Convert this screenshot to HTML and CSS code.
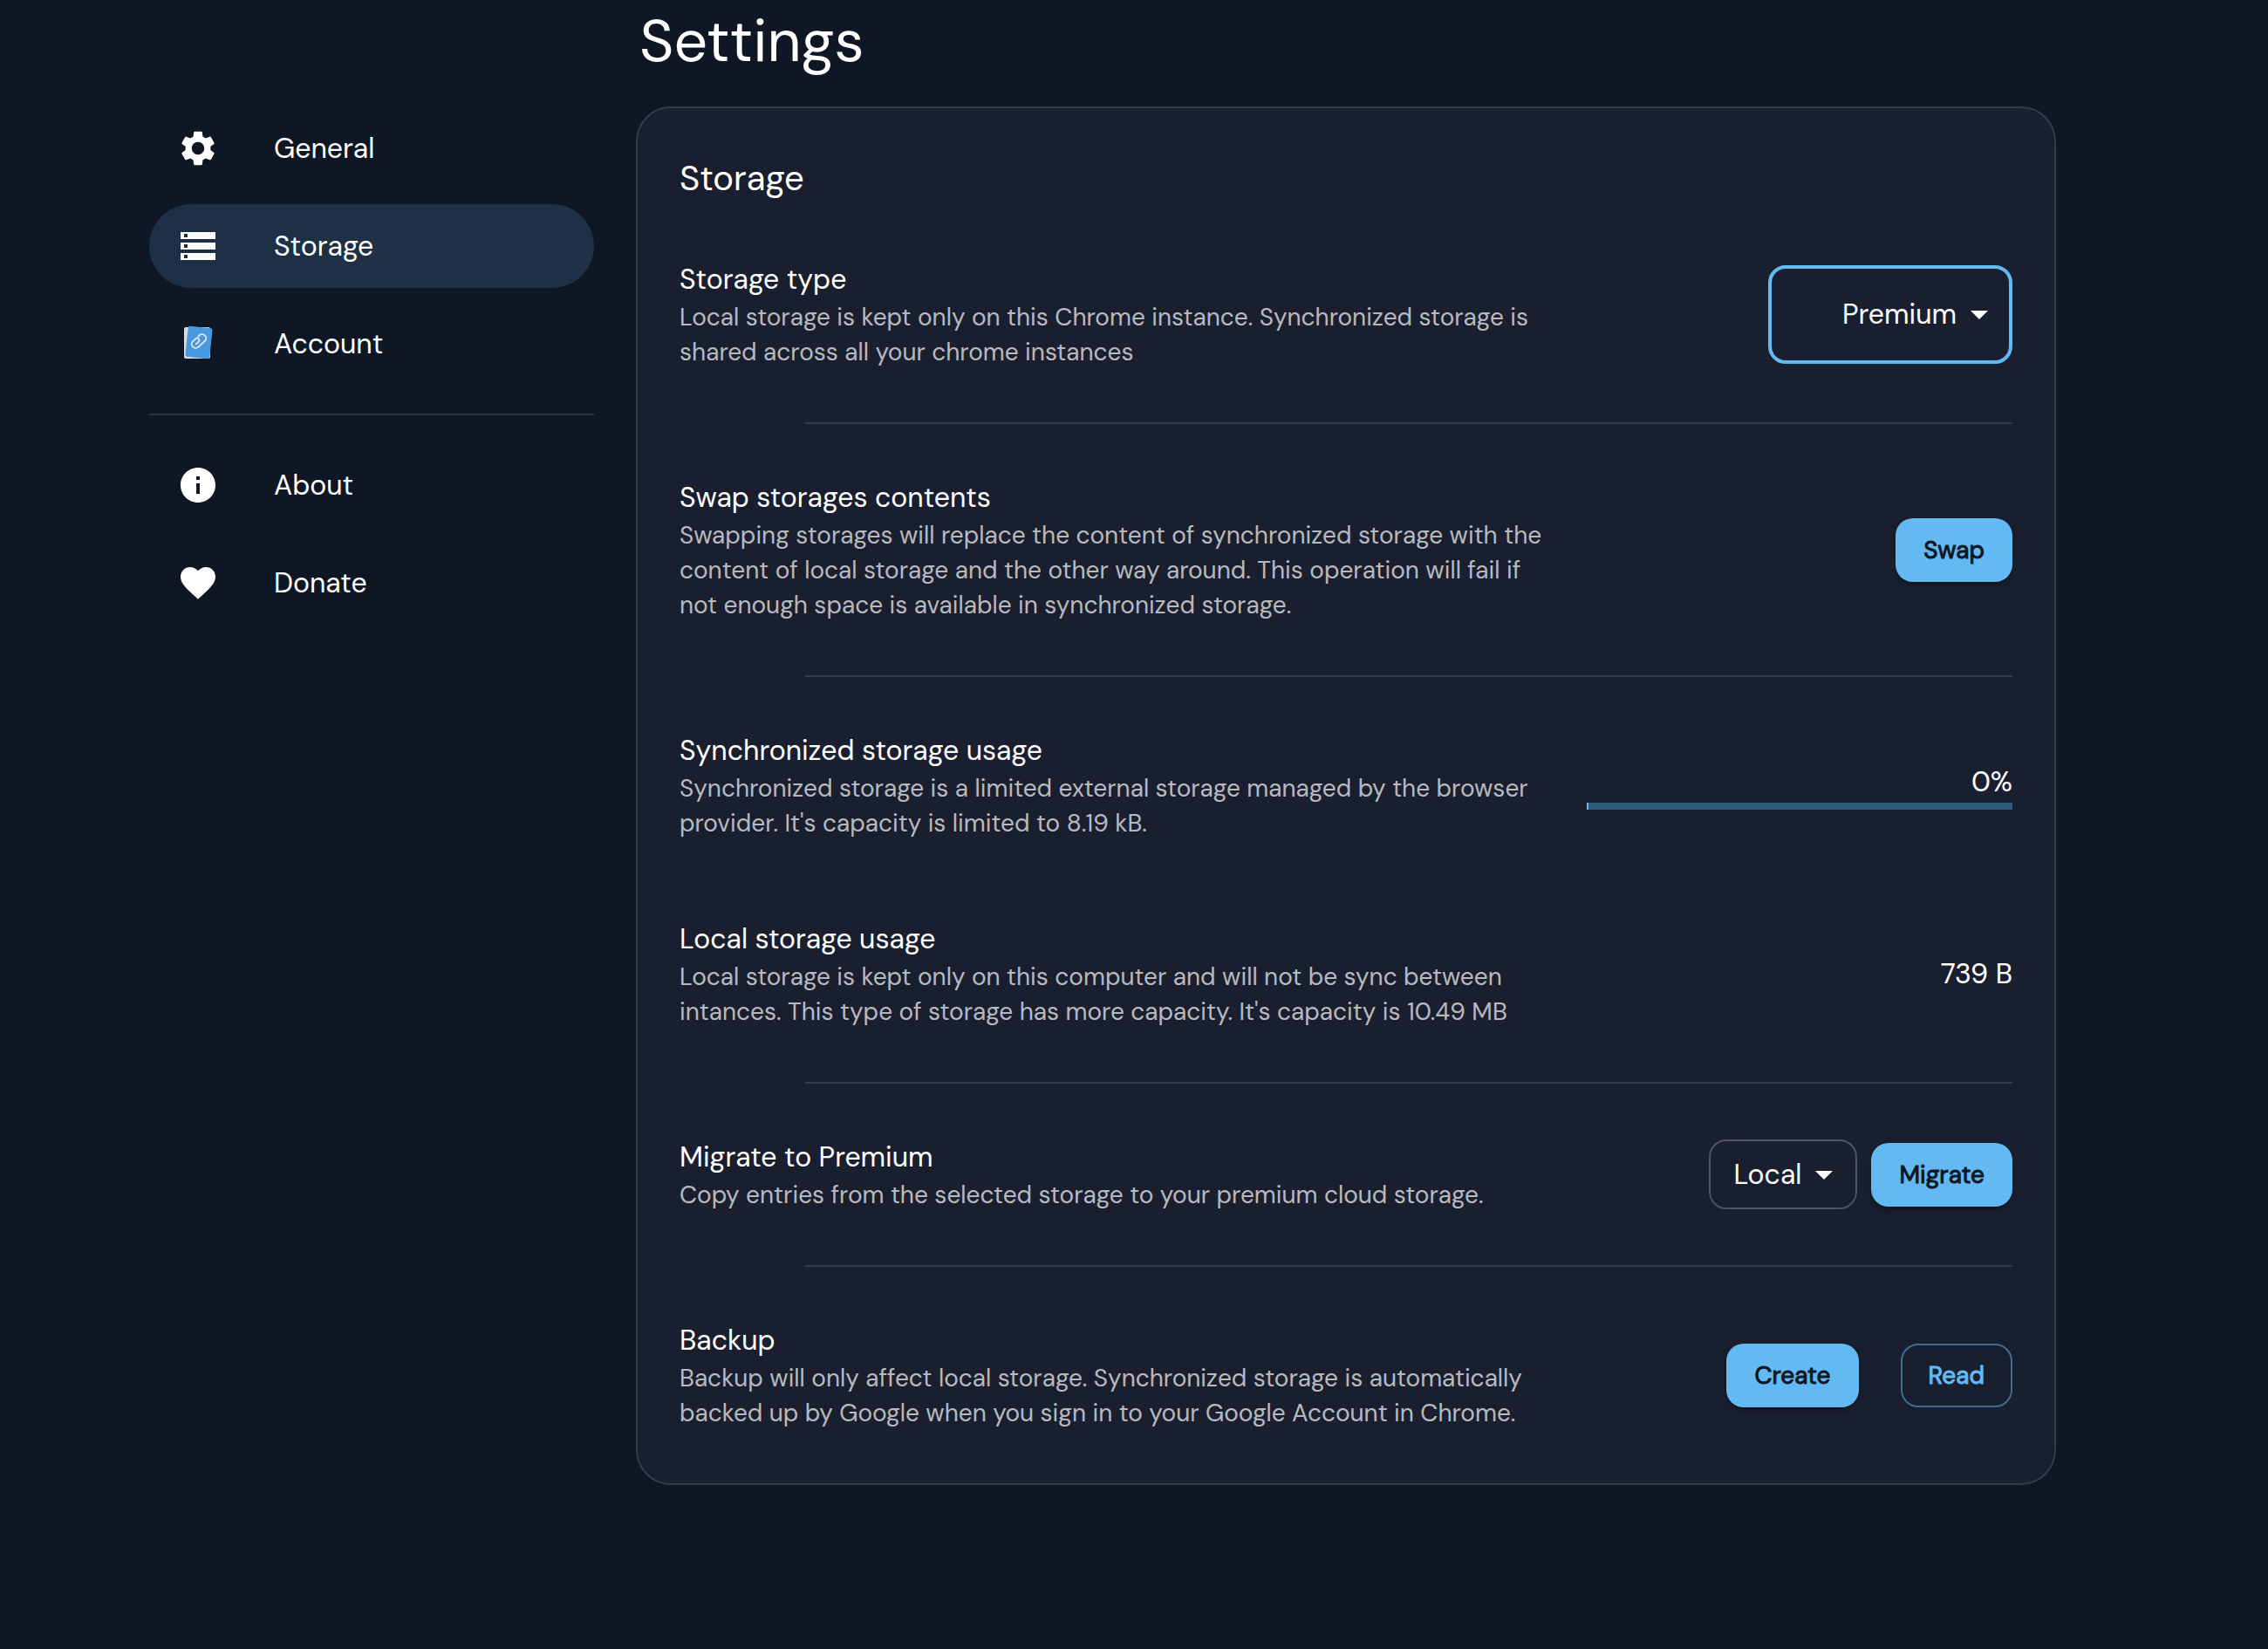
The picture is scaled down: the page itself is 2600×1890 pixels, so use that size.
FILE: index.html
```html
<!DOCTYPE html>
<html lang="en">
<head>
    <meta charset="UTF-8">
    <title>Settings</title>
    <link rel="stylesheet" href="styles.css">
</head>
<body>

<div class="page">
    <h1>Settings</h1>

    <nav class="menu">
        <a href="#general">
            <svg viewBox="0 0 24 24"><path d="M19.14 12.94c.04-.3.06-.61.06-.94 0-.32-.02-.64-.07-.94l2.03-1.58c.18-.14.23-.41.12-.61l-1.92-3.32c-.12-.22-.37-.29-.59-.22l-2.39.96c-.5-.38-1.03-.7-1.62-.94l-.36-2.54c-.04-.24-.24-.41-.48-.41h-3.84c-.24 0-.43.17-.47.41l-.36 2.54c-.59.24-1.13.57-1.62.94l-2.39-.96c-.22-.08-.47 0-.59.22L2.74 8.87c-.12.21-.08.47.12.61l2.03 1.58c-.05.3-.09.63-.09.94s.02.64.07.94l-2.03 1.58c-.18.14-.23.41-.12.61l1.92 3.32c.12.22.37.29.59.22l2.39-.96c.5.38 1.03.7 1.62.94l.36 2.54c.05.24.24.41.48.41h3.84c.24 0 .44-.17.47-.41l.36-2.54c.59-.24 1.13-.56 1.62-.94l2.39.96c.22.08.47 0 .59-.22l1.92-3.32c.12-.22.07-.47-.12-.61l-2.01-1.58zM12 15.6c-1.98 0-3.6-1.62-3.6-3.6s1.62-3.6 3.6-3.6 3.6 1.62 3.6 3.6-1.62 3.6-3.6 3.6z"/></svg>
            <span>General</span>
        </a>
        <a href="#storage" class="active">
            <svg viewBox="0 0 24 24"><path d="M2 20h20v-4H2v4zm2-3h2v2H4v-2zM2 4v4h20V4H2zm4 3H4V5h2v2zm-4 7h20v-4H2v4zm2-3h2v2H4v-2z"/></svg>
            <span>Storage</span>
        </a>
        <a href="#account">
            <svg viewBox="0 0 48 48">
                <rect x="8" y="5" width="30" height="36" rx="2" fill="#dcdcdc"/>
                <rect x="11" y="5" width="28" height="35" rx="2" fill="#4799e0" transform="rotate(6 25 22)"/>
                <path d="M3 -4.500H5a4.500 4.500 0 0 1 0 9H-5a4.500 4.500 0 0 1 0-9H-1a2.400 2.400 0 0 1 0 4.800H-4.500" transform="translate(25 21) rotate(-42)" fill="none" stroke="#dcdfe3" stroke-width="2" stroke-linecap="round"/>
            </svg>
            <span>Account</span>
        </a>
        <hr>
        <a href="#about">
            <svg viewBox="0 0 24 24"><path d="M12 2C6.480 2 2 6.480 2 12s4.480 10 10 10 10-4.480 10-10S17.520 2 12 2zm1 15h-2v-6h2v6zm0-8h-2V7h2v2z"/></svg>
            <span>About</span>
        </a>
        <a href="#donate">
            <svg viewBox="0 0 24 24"><path d="M12 21.350l-1.450-1.320C5.400 15.360 2 12.280 2 8.500 2 5.420 4.420 3 7.500 3c1.740 0 3.410.81 4.500 2.090C13.090 3.810 14.760 3 16.500 3 19.580 3 22 5.420 22 8.500c0 3.780-3.400 6.860-8.550 11.540L12 21.350z"/></svg>
            <span>Donate</span>
        </a>
    </nav>

    <main class="card">
        <h2>Storage</h2>

        <div class="row">
            <div class="text">
                <label for="type">Storage type</label>
                <p>Local storage is kept only on this Chrome instance. Synchronized storage is shared across all your chrome instances</p>
            </div>
            <div class="action">
                <div class="select big">
                    <select id="type">
                        <option>Local</option>
                        <option>Synchronized</option>
                        <option selected>Premium</option>
                    </select>
                    <svg viewBox="0 0 24 24"><path d="M7 10l5 5 5-5z"/></svg>
                </div>
            </div>
        </div>
        <hr>
        <div class="row">
            <div class="text">
                <h3>Swap storages contents</h3>
                <p>Swapping storages will replace the content of synchronized storage with the content of local storage and the other way around. This operation will fail if not enough space is available in synchronized storage.</p>
            </div>
            <div class="action">
                <button>Swap</button>
            </div>
        </div>
        <hr>
        <div class="row">
            <div class="text">
                <label for="usage">Synchronized storage usage</label>
                <p>Synchronized storage is a limited external storage managed by the browser provider. It's capacity is limited to 8.19 kB.</p>
            </div>
            <div class="usage">
                <span>0%</span>
                <progress id="usage" value="0.4" max="100"></progress>
            </div>
        </div>
        <div class="row">
            <div class="text">
                <h3>Local storage usage</h3>
                <p>Local storage is kept only on this computer and will not be sync between intances. This type of storage has more capacity. It's capacity is 10.49 MB</p>
            </div>
            <div class="action">
                <span>739 B</span>
            </div>
        </div>
        <hr>
        <div class="row">
            <div class="text">
                <label for="source">Migrate to Premium</label>
                <p>Copy entries from the selected storage to your premium cloud storage.</p>
            </div>
            <div class="action tight">
                <div class="select">
                    <select id="source">
                        <option selected>Local</option>
                        <option>Sync</option>
                    </select>
                    <svg viewBox="0 0 24 24"><path d="M7 10l5 5 5-5z"/></svg>
                </div>
                <button>Migrate</button>
            </div>
        </div>
        <hr>
        <div class="row">
            <div class="text">
                <h3>Backup</h3>
                <p>Backup will only affect local storage. Synchronized storage is automatically backed up by Google when you sign in to your Google Account in Chrome.</p>
            </div>
            <div class="action">
                <button>Create</button>
                <button class="outlined">Read</button>
            </div>
        </div>
    </main>
</div>

</body>
</html>
```
FILE: styles.css
```css
*{
    box-sizing: border-box;
    margin: 0;
    padding: 0;
}
body{
    background-color: #0f1624;
    color: #fff;
    font-family: "DM Sans", "Open Sans", sans-serif;
    font-size: 32px;
    line-height: 48px;
}
.page{
    display: grid;
    grid-template-columns: 510px 1fr;
    column-gap: 48px;
    padding: 0 243px 48px 171px;
}
h1{
    grid-column: 2;
    padding: 5px 4px 33px;
    font-size: 68px;
    font-weight: 400;
    line-height: 84px;
}
svg{
    width: 48px;
    height: 48px;
    fill: #fff;
}
hr{
    border: none;
    height: 2px;
    background-color: rgba(255, 255, 255, 0.12);
}

/* side menu */
.menu{
    display: flex;
    flex-direction: column;
    gap: 16px;
}
.menu a{
    display: flex;
    align-items: center;
    gap: 63px;
    height: 96px;
    padding: 0 32px;
    border-radius: 48px;
    color: #fff;
    text-decoration: none;
}
.menu a.active{
    background-color: #1e3045;
}
.menu hr{
    margin: 16px 0;
}

/* card */
.card{
    padding-bottom: 16px;
    border: 2px solid #353a49;
    border-radius: 40px;
    background-color: #1a1f30;
}
.card h2{
    padding: 56px 48px 24px;
    font-size: 40px;
    font-weight: 400;
}
.card hr{
    margin: 16px 48px 16px 192px;
}
.row{
    display: flex;
    align-items: center;
    justify-content: space-between;
    gap: 32px;
    padding: 44px 48px;
}
.text{
    flex: 0 1 1000px;
}
.text h3, .text label{
    display: block;
    font-size: 32px;
    font-weight: 400;
}
.text p{
    color: rgba(255, 255, 255, 0.7);
    font-size: 28px;
    line-height: 40px;
}
.action{
    display: flex;
    align-items: center;
    gap: 48px;
    margin: -16px 0;
}
.tight{
    gap: 16px;
}
.usage{
    width: 488px;
    text-align: right;
}
.usage span{
    display: block;
}
progress{
    appearance: none;
    display: block;
    width: 100%;
    height: 8px;
    border: none;
}
progress::-webkit-progress-bar{
    background-color: #305b78;
}
progress::-webkit-progress-value{
    background-color: #63baf3;
}

/* controls */
button{
    height: 73px;
    padding: 0 32px;
    border: none;
    border-radius: 20px;
    background-color: #63baf3;
    box-shadow: 0 6px 2px -4px rgba(0, 0, 0, 0.2), 0 4px 4px rgba(0, 0, 0, 0.14), 0 2px 10px rgba(0, 0, 0, 0.12);
    color: #0f1624;
    font-family: inherit;
    font-size: 28px;
    font-weight: 400;
    -webkit-text-stroke: 1px;
}
button.outlined{
    padding: 0 30px;
    border: 2px solid #3f6d92;
    background-color: transparent;
    box-shadow: none;
    color: #63baf3;
}
.select{
    position: relative;
}
.select svg{
    position: absolute;
    top: 50%;
    right: 14px;
    margin-top: -24px;
    pointer-events: none;
}
select{
    appearance: none;
    display: block;
    width: 170px;
    height: 80px;
    padding: 0 26px;
    border: 2px solid rgba(255, 255, 255, 0.23);
    border-radius: 20px;
    outline: none;
    background-color: transparent;
    color: #fff;
    font-family: inherit;
    font-size: 32px;
}
.big select{
    width: 280px;
    height: 113px;
    padding: 0 60px 0 28px;
    border: 4px solid #63baf3;
    text-align: right;
    text-align-last: right;
}
option{
    background-color: #1a1f30;
}
```
